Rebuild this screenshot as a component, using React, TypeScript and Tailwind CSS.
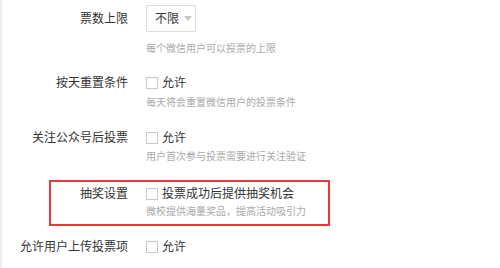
import React from 'react'

const font = { fontFamily: '"Liberation Sans", "Noto Sans CJK SC", sans-serif' }

function Check({ label }: { label: string }) {
  return (
    <div className="flex h-[20px] items-center">
      <span className="h-[12px] w-[12px] border border-[#c8c8c8] bg-white" />
      <span className="ml-[4px] text-[12px] text-[#333]">{label}</span>
    </div>
  )
}

function Label({ children, w = 'w-[128px]' }: { children: React.ReactNode; w?: string }) {
  return (
    <div className={`${w} flex h-[20px] shrink-0 items-center justify-end text-[12px] text-[#333]`}>
      {children}
    </div>
  )
}

export default function App() {
  return (
    <div className="h-[268px] w-[500px] overflow-hidden border-l-2 border-[#eeeeee] bg-white" style={font}>
      <div className="-ml-[2px]">
        {/* 票数上限 */}
        <div className="flex pt-[5px]">
          <div className="flex h-[27px] w-[128px] shrink-0 items-center justify-end text-[12px] text-[#333]">票数上限</div>
          <div className="ml-[18px]">
            <div className="flex h-[27px] w-[50px] items-center border border-[#dddddd] pl-[8px] text-[12px] text-[#333]">
              不限
              <svg className="ml-[5px]" width="8" height="5" viewBox="0 0 8 5">
                <path d="M0 0h8L4 5z" fill="#c4c4c4" />
              </svg>
            </div>
            <p className="mt-[9px] text-[10px] leading-[16px] text-[#a9a9a9]">每个微信用户可以投票的上限</p>
          </div>
        </div>

        {/* 按天重置条件 */}
        <div className="mt-[16px] flex">
          <Label>按天重置条件</Label>
          <div className="ml-[18px]">
            <Check label="允许" />
            <p className="mt-[2px] text-[10px] leading-[16px] text-[#a9a9a9]">每天将会重置微信用户的投票条件</p>
          </div>
        </div>

        {/* 关注公众号后投票 */}
        <div className="mt-[17px] flex">
          <Label>关注公众号后投票</Label>
          <div className="ml-[18px]">
            <Check label="允许" />
            <p className="mt-[1px] text-[10px] leading-[16px] text-[#a9a9a9]">用户首次参与投票需要进行关注验证</p>
          </div>
        </div>

        {/* 抽奖设置 */}
        <div className="ml-[49px] mt-[15px] flex h-[46px] w-[281px] border-2 border-[#f2353b] pt-[2px]">
          <Label w="w-[77px]">抽奖设置</Label>
          <div className="ml-[18px]">
            <Check label="投票成功后提供抽奖机会" />
            <p className="text-[10px] leading-[16px] text-[#a9a9a9]">微校提供海量奖品，提高活动吸引力</p>
          </div>
        </div>

        {/* 允许用户上传投票项 */}
        <div className="mt-[11px] flex">
          <Label>允许用户上传投票项</Label>
          <div className="ml-[18px]">
            <Check label="允许" />
          </div>
        </div>
      </div>
    </div>
  )
}
